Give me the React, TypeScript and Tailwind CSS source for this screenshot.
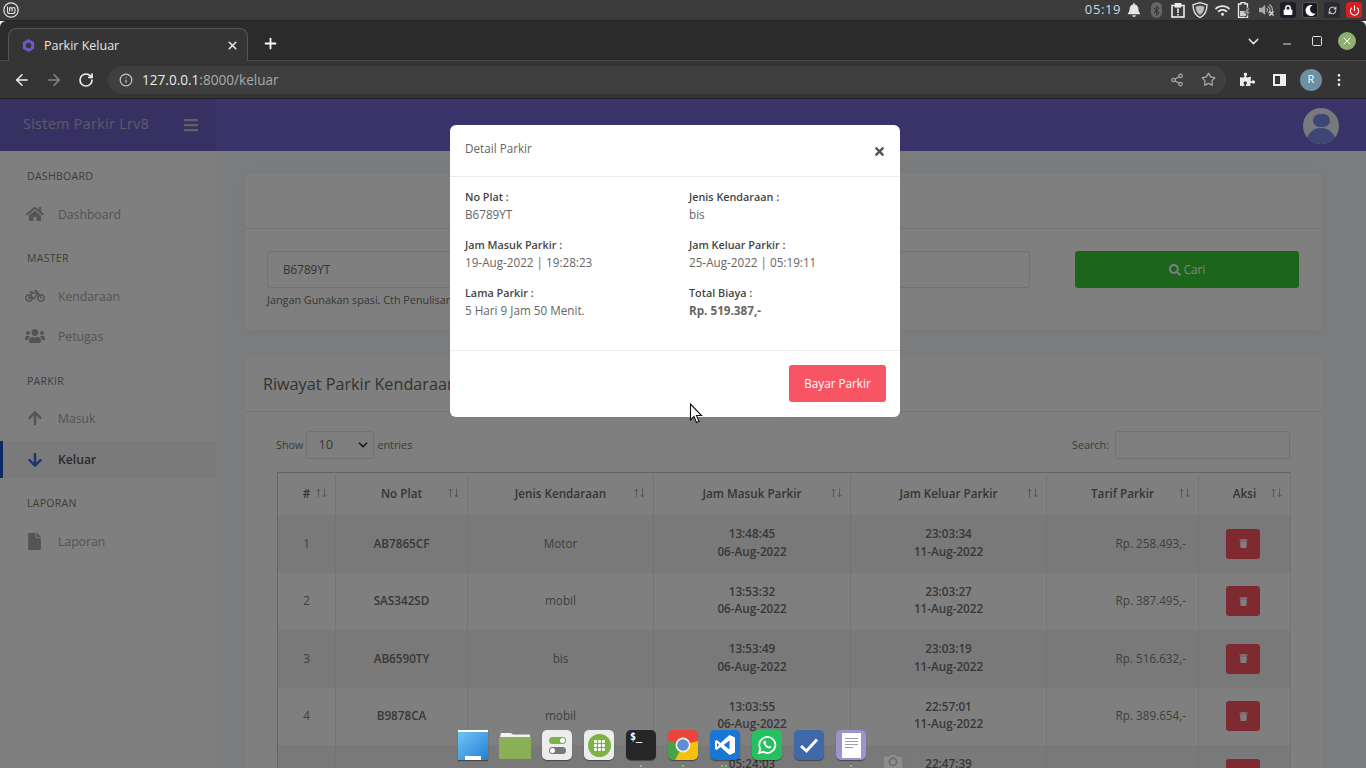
// App.tsx - halaman Parkir Keluar dengan modal Detail Parkir
import type { ReactNode } from 'react'
import { FaArrowDown, FaArrowUp, FaBars, FaBicycle, FaBell, FaFile, FaHome, FaLock, FaMoon, FaSearch, FaTimes, FaTrash, FaUsers, FaPuzzlePiece, FaBluetoothB, FaWifi, FaVolumeUp } from 'react-icons/fa'
import { ArrowLeft, ArrowRight, ChevronDown, Info, Minus, RotateCw, Share2, Square, Star, X, Plus, Power, RefreshCw, EllipsisVertical } from 'lucide-react'

const rows = [
  { no: 1, plat: 'AB7865CF', jenis: 'Motor', masuk: ['13:48:45', '06-Aug-2022'], keluar: ['23:03:34', '11-Aug-2022'], tarif: 'Rp. 258.493,-' },
  { no: 2, plat: 'SAS342SD', jenis: 'mobil', masuk: ['13:53:32', '06-Aug-2022'], keluar: ['23:03:27', '11-Aug-2022'], tarif: 'Rp. 387.495,-' },
  { no: 3, plat: 'AB6590TY', jenis: 'bis', masuk: ['13:53:49', '06-Aug-2022'], keluar: ['23:03:19', '11-Aug-2022'], tarif: 'Rp. 516.632,-' },
  { no: 4, plat: 'B9878CA', jenis: 'mobil', masuk: ['13:03:55', '06-Aug-2022'], keluar: ['22:57:01', '11-Aug-2022'], tarif: 'Rp. 389.654,-' },
  // baris terakhir terpotong tepi layar, hanya jam yang terlihat
  { no: 5, plat: '', jenis: '', masuk: ['05:24:03', '\u00a0'], keluar: ['22:47:39', '\u00a0'], tarif: '' },
]

const heads = ['#', 'No Plat', 'Jenis Kendaraan', 'Jam Masuk Parkir', 'Jam Keluar Parkir', 'Tarif Parkir', 'Aksi']

function SideLabel({ children, top }: { children: ReactNode; top?: boolean }) {
  return <div className={`h-[42px] pl-[27px] text-[10.5px] leading-4 tracking-[0.3px] text-[#7c7c7c] uppercase ${top ? 'pt-4' : 'pt-[17px]'}`}>{children}</div>
}

function SideItem({ icon, label, active }: { icon: ReactNode; label: string; active?: boolean }) {
  return (
    <div className={`flex items-center ${active ? 'h-[37px] mt-[3px] bg-[#f4f4f4] border-l-[3px] border-[#1a56c4] font-semibold text-[#555]' : 'h-10 text-[#a8a8a8]'}`}>
      <div className={`flex justify-center text-[#a8a8a8] ${active ? 'w-[21px] ml-[21px]' : 'w-[21px] ml-6'}`}>{icon}</div>
      <span className={`ml-[13px] text-[12.2px] ${active ? 'pt-px' : 'pt-[2px]'}`}>{label}</span>
    </div>
  )
}

function ModalField({ label, value, strong }: { label: string; value: string; strong?: boolean }) {
  return (
    <div className="h-12">
      <div className="text-[10.8px] leading-4 font-semibold text-[#444]">{label}</div>
      <div className={`leading-[19px] text-[11.7px] text-[#666] ${strong ? 'font-bold' : ''}`}>{value}</div>
    </div>
  )
}

function TrayBox({ className, children }: { className: string; children: ReactNode }) {
  return <div className="w-[22px] flex justify-center"><div className={`w-4 h-4 rounded-[3px] flex items-center justify-center ${className}`}>{children}</div></div>
}

function SortArrows() {
  return (
    <svg className="absolute right-[8px] top-[15px]" width="11" height="10" viewBox="0 0 11 10" fill="none" stroke="#b0b0b0" strokeWidth="1">
      <path d="M2.5 9.5 V1 M.7 3 L2.5 1 L4.3 3" />
      <path d="M8.5 .5 V9 M6.7 7 L8.5 9 L10.3 7" />
    </svg>
  )
}

function DockTile({ className, children }: { className: string; children?: ReactNode }) {
  return <div className={`w-[30px] h-[30px] rounded-[5px] flex items-center justify-center overflow-hidden shadow-[0_1px_1px_rgba(0,0,0,0.4)] ${className}`}>{children}</div>
}

function Dock() {
  return (
    <div className="absolute left-[458px] top-[730px] flex gap-3 items-start">
      {/* files */}
      <DockTile className="bg-gradient-to-br from-[#6fc6f2] to-[#1f7fd6] rounded-none border-t-2 border-white items-end">
        <div className="w-[16px] h-1 bg-white" />
      </DockTile>
      {/* folder */}
      <svg width="32" height="30" viewBox="0 0 32 30" className="-mx-px">
        <path d="M2 3 L12 3 L14 4.5 L31 4.5 V7 H1 Z" fill="#f2f2f2" />
        <path d="M0 7 H32 V28 A1 1 0 0 1 31 29 H1 A1 1 0 0 1 0 28 Z" fill="#8bae59" />
      </svg>
      {/* settings */}
      <DockTile className="bg-[#ececec] flex-col gap-[3px]">
        <div className="w-[17px] h-[7px] rounded-full bg-[#7cb342] flex justify-end items-center pr-px"><div className="w-[5px] h-[5px] rounded-full bg-white" /></div>
        <div className="w-[17px] h-[7px] rounded-full bg-[#777] flex items-center pl-px"><div className="w-[5px] h-[5px] rounded-full bg-white" /></div>
      </DockTile>
      {/* apps */}
      <DockTile className="bg-[#ececec]">
        <div className="w-[23px] h-[23px] rounded-full bg-[#7cb342] grid grid-cols-3 gap-px p-[6px]">
          {Array.from({ length: 9 }).map((_, i) => <div key={i} className="bg-white rounded-[1px]" />)}
        </div>
      </DockTile>
      {/* terminal */}
      <DockTile className="bg-[#262626] items-start justify-start pl-[4px] pt-[1px]">
        <span className="text-[10px] leading-3 text-white font-bold font-['DejaVu_Sans_Mono',monospace]">$_</span>
      </DockTile>
      {/* chrome */}
      <DockTile className="bg-transparent">
        <svg width="30" height="30" viewBox="0 0 30 30">
          <rect width="30" height="30" rx="5" fill="#e8453c" />
          <path d="M0 11 L15 15 L7 30 L5 30 A5 5 0 0 1 0 25 Z" fill="#46a34a" />
          <path d="M30 11 L15 15 L7 30 L25 30 A5 5 0 0 0 30 25 Z" fill="#f4c20d" />
          <circle cx="15" cy="15" r="7.5" fill="#eee" />
          <circle cx="15" cy="15" r="5.8" fill="#5b8fd0" />
        </svg>
      </DockTile>
      {/* vscode */}
      <DockTile className="bg-[#1976d2]">
        <svg width="22" height="22" viewBox="0 0 22 22">
          <path d="M15.5 1 L21 3.5 V18.5 L15.5 21 L6.5 13 L2.8 16 L1 15 V7 L2.8 6 L6.5 9 Z M15.5 6.5 L9.7 11 L15.5 15.5 Z M3 8.8 V13.2 L5 11 Z" fill="#fff" fillRule="evenodd" />
        </svg>
      </DockTile>
      {/* whatsapp */}
      <DockTile className="bg-[#25c05f]">
        <svg width="22" height="22" viewBox="0 0 22 22">
          <path d="M3 19 L4.3 14.8 A8 8 0 1 1 7.2 17.8 Z" fill="none" stroke="#fff" strokeWidth="1.8" />
          <path d="M8 6.8 C7 7.6 7 9 8 10.6 C9.4 13 11.6 14.6 13.6 14.6 C14.8 14.4 15.4 13.6 15.4 12.8 L13.4 11.8 L12.6 12.6 C11.4 12.2 10.2 11 9.6 9.6 L10.4 8.8 L9.4 6.8 Z" fill="#fff" />
        </svg>
      </DockTile>
      {/* tasks */}
      <DockTile className="bg-[#3f69a8]">
        <svg width="22" height="22" viewBox="0 0 22 22"><path d="M3 12 L8.5 17 L19 5.5" fill="none" stroke="#fff" strokeWidth="3" /></svg>
      </DockTile>
      {/* notes */}
      <DockTile className="bg-[#9c93d0]">
        <div className="w-[19px] h-[25px] bg-white flex flex-col gap-[2px] pt-[5px] px-[3px]">
          <div className="h-px bg-[#9a9ab0]" /><div className="h-px bg-[#9a9ab0]" /><div className="h-px bg-[#9a9ab0]" /><div className="h-px w-2/3 bg-[#9a9ab0]" />
        </div>
      </DockTile>
      {/* camera, sedang muncul dari bawah */}
      <div className="mt-[18px] w-[30px] h-[30px] rounded-[5px] bg-[#777]/50 flex items-start justify-center pt-[3px]">
        <svg width="22" height="20" viewBox="0 0 24 22"><path d="M2 6h6l1-2h6l1 2h6v13H2z" fill="#8c8c8c" /><circle cx="12" cy="12" r="4" fill="none" stroke="#6e6e6e" strokeWidth="2" /></svg>
      </div>
      {/* titik aplikasi aktif */}
      {[182, 224, 263, 267, 392].map(x => (
        <div key={x} className="absolute top-[35px] w-[2px] h-[2px] rounded-full bg-[#8fd06a]" style={{ left: x }} />
      ))}
    </div>
  )
}

export default function App() {
  return (
    <div className="relative w-[1366px] h-[768px] overflow-hidden bg-[#f6f8fc] font-['Open_Sans',sans-serif]">
      {/* panel desktop */}
      <div className="h-[21px] bg-[#3b3b3b] border-b border-[#262626] flex items-center justify-between pl-[3px] pr-px">
        <svg width="16" height="16" viewBox="0 0 16 16" fill="none" stroke="#e6e6e6">
          <circle cx="8" cy="8" r="7.2" strokeWidth="1.2" />
          <path d="M4.5 4.5 V9.5 A2 2 0 0 0 6.5 11.5 H10 A2 2 0 0 0 12 9.5 V7 A1.5 1.5 0 0 0 9 7 V9.5 M9 7 A1.5 1.5 0 0 0 6.6 6 V9.5" strokeWidth="1.1" />
        </svg>
        <div className="flex items-center text-[#e6e6e6]">
          <span className="text-[13px] tracking-[0.6px] text-[#cfd8e0] mr-[2px]">05:19</span>
          <div className="w-[22px] flex justify-center"><FaBell size={14} /></div>
          <div className="w-[22px] flex justify-center"><div className="w-[11px] h-[16px] rounded-full bg-[#666] flex items-center justify-center"><FaBluetoothB size={11} className="text-[#333]" /></div></div>
          <div className="w-[22px] flex justify-center">
            <svg width="14" height="15" viewBox="0 0 14 15" fill="none" stroke="#eee" strokeWidth="1.6"><rect x="1" y="2.5" width="12" height="11.5" /><rect x="4.5" y="0.8" width="5" height="3" fill="#eee" /><path d="M7 5.5 V10 M7 11 V12.6" /></svg>
          </div>
          <div className="w-[22px] flex justify-center">
            <svg width="16" height="16" viewBox="0 0 16 16"><path d="M8 .6 L15 2.8 C15 9 12.5 13.5 8 15.6 C3.5 13.5 1 9 1 2.8 Z" fill="none" stroke="#ddd" strokeWidth="1.4" /><path d="M8 3.5 L12.4 4.8 C12.2 8.6 10.8 11.4 8 13 C5.2 11.4 3.8 8.6 3.6 4.8 Z" fill="#bbb" /></svg>
          </div>
          <div className="w-[22px] flex justify-center"><FaWifi size={15} /></div>
          <div className="w-[22px] flex justify-center">
            <svg width="14" height="16" viewBox="0 0 14 16"><path d="M4 .6 H8 V2 H10.5 V15.4 H1.5 V2 H4 Z" fill="none" stroke="#eee" strokeWidth="1.3" /><path d="M3 9 H9 V14 H3 Z" fill="#ccc" /><path d="M10 6 L7.5 11 H10 L8.5 15.6 L13.6 9.6 H11 L13 6 Z" fill="#999" stroke="#3b3b3b" strokeWidth=".6" /></svg>
          </div>
          <div className="w-[22px] flex justify-center relative">
            <FaVolumeUp size={14} className="text-[#aaa]" />
            <X size={7} strokeWidth={4} className="absolute right-[2px] bottom-0 text-[#ddd]" />
          </div>
          <TrayBox className="bg-[#1e1e2a]"><FaLock size={10} className="text-white" /></TrayBox>
          <TrayBox className="bg-[#1a1a24] border border-[#555]"><FaMoon size={11} className="text-white" /></TrayBox>
          <TrayBox className="bg-[#2a2a32]"><RefreshCw size={9} strokeWidth={2.5} /></TrayBox>
          <TrayBox className="bg-[#d32020]"><Power size={11} strokeWidth={2.5} className="text-white" /></TrayBox>
        </div>
      </div>

      {/* tab strip */}
      <div className="h-[40px] bg-[#2b2b2b] flex items-end pl-2 border-b border-[#4a4a4a] rounded-t-md">
        <div className="w-[240px] h-[33px] -mb-px bg-[#353535] border border-b-0 border-[#555] rounded-t-lg flex items-center pl-3 pr-2">
          <svg width="15" height="15" viewBox="0 0 16 16">
            <path d="M8 1 L14 4.5 V11.5 L8 15 L2 11.5 V4.5 Z" fill="#6a5acd" />
            <circle cx="8" cy="8" r="3" fill="#353535" />
          </svg>
          <span className="ml-2 pt-[3px] text-[12.5px] text-[#e4e4e4]">Parkir Keluar</span>
          <X size={13} strokeWidth={3} className="ml-auto text-[#e4e4e4]" />
        </div>
        <div className="h-[33px] flex items-center ml-[14px]"><Plus size={17} strokeWidth={2.5} className="text-white" /></div>
        <div className="h-[38px] ml-auto flex items-center text-[#e0e0e0]">
          <ChevronDown size={17} strokeWidth={2} className="mr-[19px]" />
          <Minus size={12} strokeWidth={2} className="mr-[18px] translate-y-[3px]" />
          <Square size={12} strokeWidth={2} className="mr-[15px]" />
          <div className="w-[18px] h-[18px] rounded-full bg-[#8fae72] flex items-center justify-center mr-[10px]"><X size={12} strokeWidth={2} className="text-white" /></div>
        </div>
      </div>

      {/* toolbar */}
      <div className="h-[38px] bg-[#353535] border-b border-[#222] flex items-center pl-[13px]">
        <ArrowLeft size={18} strokeWidth={2} className="text-[#eee]" />
        <ArrowRight size={18} strokeWidth={2} className="ml-[14px] text-[#888]" />
        <RotateCw size={16} strokeWidth={2.5} className="ml-[15px] text-[#eee]" />
        <div className="ml-[14px] w-[1118px] h-[28px] rounded-full bg-[#3f3f3f] flex items-center pl-[11px] pr-[10px]">
          <Info size={14} className="text-[#c8c8c8]" />
          <span className="ml-[9px] pt-[2px] text-[13.6px] text-[#e8e8e8]">127.0.0.1<span className="text-[#a8a8a8]">:8000/keluar</span></span>
          <Share2 size={14} className="ml-auto text-[#aaa]" />
          <Star size={15} className="ml-[17px] text-[#aaa]" />
        </div>
        <FaPuzzlePiece size={15} className="ml-[14px] text-[#eee]" />
        <div className="ml-[18px] w-[13px] h-[12px] border-2 border-r-[6px] border-[#eee]" />
        <div className="ml-[14px] w-[22px] h-[22px] rounded-full bg-[#6f8fa3] text-white text-[11px] flex items-center justify-center">R</div>
        <EllipsisVertical size={16} className="ml-[9px] text-[#eee]" />
      </div>

      {/* navbar */}
      <div className="h-[52px] flex bg-[#7367d2]">
        <div className="w-[216px] bg-[#6f63c6] flex items-center pl-[23px] pr-[17px] justify-between">
          <span className="text-[14.4px] pb-[2px] text-[#b8b3d0] tracking-[0.3px]">Sistem Parkir Lrv8</span>
          <FaBars size={16} className="text-[#c4c0c8]" />
        </div>
        <div className="flex-1 flex items-center justify-end pr-[27px]">
          <div className="mt-[2px] w-9 h-9 rounded-full bg-[#f0f2f8] overflow-hidden flex flex-col items-center">
            <div className="w-[17px] h-[17px] rounded-full bg-[#7b8ce8] mt-[6px]" />
            <div className="w-[30px] h-[20px] rounded-t-full bg-[#7b8ce8] mt-[1px]" />
          </div>
        </div>
      </div>

      <div className="flex h-[617px]">
        {/* sidebar */}
        <div className="w-[216px] shrink-0 bg-white pt-px">
          <SideLabel top>Dashboard</SideLabel>
          <SideItem icon={<FaHome size={18} />} label="Dashboard" />
          <SideLabel top>Master</SideLabel>
          <SideItem icon={<FaBicycle size={20} />} label="Kendaraan" />
          <SideItem icon={<FaUsers size={20} />} label="Petugas" />
          <SideLabel>Parkir</SideLabel>
          <SideItem icon={<FaArrowUp size={16} />} label="Masuk" />
          <SideItem active icon={<FaArrowDown size={16} className="text-[#3a6ae0]" />} label="Keluar" />
          <SideLabel>Laporan</SideLabel>
          <div className="mt-px">
            <SideItem icon={<FaFile size={17} />} label="Laporan" />
          </div>
        </div>

        {/* konten */}
        <div className="flex-1 pl-[29px] pt-[22px]">
          <div className="w-[1077px] h-[157px] bg-white rounded-[5px] shadow-[0_0_8px_rgba(0,0,0,0.04)]">
            <div className="h-[56px] border-b border-[#e8e8e8]" />
            <div className="flex pt-[22px] pl-[22px]">
              <div className="w-[763px]">
                <div className="h-[37px] border border-[#e4e4e4] rounded-[3px] flex items-center pl-[15px] text-[11.7px] text-[#666]">B6789YT</div>
                <p className="mt-[4px] text-[10.8px] text-[#6e6e6e] whitespace-nowrap">Jangan Gunakan spasi. Cth Penulisan : B1234XY</p>
              </div>
              <div className="ml-[45px] w-[224px] h-[37px] rounded-[3px] bg-[#38cc38] flex items-center justify-center gap-[3px] text-[11.7px] text-white">
                <FaSearch size={12} />
                <span>Cari</span>
              </div>
            </div>
          </div>

          <div className="mt-[27px] w-[1077px] bg-white rounded-[5px]">
            <div className="h-[55px] border-b border-[#e8e8e8] flex items-center pl-[18px] text-[16.2px] text-[#666]">Riwayat Parkir Kendaraan</div>
            <div className="pt-[19px] px-[32px]">
              <div className="flex items-center justify-between h-[28px] text-[10.8px] text-[#777]">
                <div className="flex items-center -ml-px">
                  <span>Show</span>
                  <div className="ml-[3px] w-[68px] h-[28px] border border-[#e4e4e4] rounded-[3px] flex items-center justify-between pl-[11px] pr-[3px] text-[13px] text-[#777]">
                    10 <ChevronDown size={14} strokeWidth={3} className="text-[#333]" />
                  </div>
                  <span className="ml-[3px]">entries</span>
                </div>
                <div className="flex items-center">
                  <span>Search:</span>
                  <div className="ml-[6px] w-[175px] h-[28px] border border-[#e4e4e4] rounded-[3px]" />
                </div>
              </div>

              <table className="mt-[13px] w-[1013px] table-fixed border-collapse text-[11.7px] text-[#808080]">
                <colgroup>
                  <col className="w-[58px]" />
                  <col className="w-[132px]" />
                  <col className="w-[186px]" />
                  <col className="w-[197px]" />
                  <col className="w-[196px]" />
                  <col className="w-[152px]" />
                  <col className="w-[92px]" />
                </colgroup>
                <thead>
                  <tr className="h-[42.5px] border border-[#c8c8c8] border-b-0">
                    {heads.map(h => (
                      <th key={h} className="relative border-r border-[#e8e8e8] font-semibold text-[#6c6c6c]">
                        {h}
                        <SortArrows />
                      </th>
                    ))}
                  </tr>
                </thead>
                <tbody>
                  {rows.map(r => (
                    <tr key={r.no} className={`h-[57.5px] border-x border-[#c8c8c8] ${r.no % 2 === 1 ? 'bg-[#f2f2f2]' : 'bg-white'}`}>
                      <td className="border-r border-[#e8e8e8] text-center">{r.no < 5 ? r.no : ''}</td>
                      <td className="border-r border-[#e8e8e8] text-center font-semibold text-[#707070]">{r.plat}</td>
                      <td className="border-r border-[#e8e8e8] text-center">{r.jenis}</td>
                      <td className="border-r border-[#e8e8e8] text-center font-semibold leading-[17.5px] pb-[2px] text-[#707070]">{r.masuk[0]}<br />{r.masuk[1]}</td>
                      <td className="border-r border-[#e8e8e8] text-center font-semibold leading-[17.5px] pb-[2px] text-[#707070]">{r.keluar[0]}<br />{r.keluar[1]}</td>
                      <td className="border-r border-[#e8e8e8] text-right pr-3">{r.tarif}</td>
                      <td className="border-r border-[#e8e8e8]">
                        <div className="ml-[27px] w-[34px] h-[30px] rounded-[3px] bg-[#ff5560] flex items-center justify-center text-white"><FaTrash size={9} /></div>
                      </td>
                    </tr>
                  ))}
                </tbody>
              </table>
            </div>
          </div>
        </div>
      </div>

      {/* backdrop + modal */}
      <div className="absolute left-0 right-0 top-[99px] bottom-0 bg-black/50 flex justify-center items-start pt-[26px] pr-4">
        <div className="w-[450px] h-[292px] bg-white rounded-[6px] flex flex-col">
          <div className="h-[52px] border-b border-[#e9ecef] flex justify-between pl-[15px] pr-[14px]">
            <span className="mt-[15px] text-[11.7px] text-[#666]">Detail Parkir</span>
            <FaTimes size={13} className="mt-5 text-[#555]" />
          </div>
          <div className="flex-1 grid grid-cols-[224px_1fr] pt-3 pl-[15px] auto-rows-[48px]">
            <ModalField label="No Plat :" value="B6789YT" />
            <ModalField label="Jenis Kendaraan :" value="bis" />
            <ModalField label="Jam Masuk Parkir :" value="19-Aug-2022 | 19:28:23" />
            <ModalField label="Jam Keluar Parkir :" value="25-Aug-2022 | 05:19:11" />
            <ModalField label="Lama Parkir :" value="5 Hari 9 Jam 50 Menit." />
            <ModalField label="Total Biaya :" value="Rp. 519.387,-" strong />
          </div>
          <div className="h-[67px] border-t border-[#e9ecef] flex justify-end items-start pt-[14px] pr-[14px]">
            <div className="w-[97px] h-[37px] rounded-[3px] bg-[#f75564] text-white text-[11.7px] flex items-center justify-center">Bayar Parkir</div>
          </div>
        </div>
      </div>

      {/* kursor */}
      <svg className="absolute left-[689px] top-[403px]" width="14" height="22" viewBox="0 0 14 22">
        <path d="M1.5 1 V17 L5 13.5 L7.5 19.5 L10 18.5 L7.5 12.5 H12.5 Z" fill="#fff" stroke="#111" strokeWidth="1.1" />
      </svg>

      <Dock />
    </div>
  )
}
